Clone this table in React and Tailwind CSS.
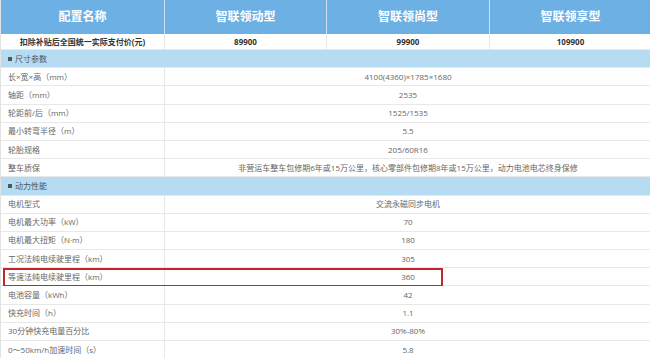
const font = { fontFamily: '"Open Sans", "Noto Sans CJK SC", sans-serif' };

const sections = [
  {
    title: '尺寸参数',
    rows: [
      ['长×宽×高（mm）', '4100(4360)×1785×1680'],
      ['轴距（mm）', '2535'],
      ['轮距前/后（mm）', '1525/1535'],
      ['最小转弯半径（m）', '5.5'],
      ['轮胎规格', '205/60R16'],
      ['整车质保', '非营运车整车包修期6年或15万公里，核心零部件包修期8年或15万公里，动力电池电芯终身保修'],
    ],
  },
  {
    title: '动力性能',
    rows: [
      ['电机型式', '交流永磁同步电机'],
      ['电机最大功率（kW）', '70'],
      ['电机最大扭矩（N·m）', '180'],
      ['工况法纯电续驶里程（km）', '305'],
      ['等速法纯电续驶里程（km）', '360', true],
      ['电池容量（kWh）', '42'],
      ['快充时间（h）', '1.1'],
      ['30分钟快充电量百分比', '30%-80%'],
      ['0～50km/h加速时间（s）', '5.8'],
    ],
  },
];

const cols = 'grid grid-cols-[164px_162px_163px_161px]';

const DataRow = ({ label, value, marked }) => (
  <div className={`${cols} relative h-[18.2px] border-b border-[#e8e8e8] bg-white text-[8px] text-[#666]`}>
    <div className="flex items-center border-r border-[#e8e8e8] pl-[7px]">{label}</div>
    <div className="col-span-3 flex items-center justify-center">{value}</div>
    {marked && (
      <div className="absolute left-[2px] top-0 h-[19px] w-[440px] border-2 border-[#c4262e]"></div>
    )}
  </div>
);

const SectionRow = ({ title }) => (
  <div className="flex h-[18.2px] items-center border-b border-[#e8e8e8] bg-[#b5dcf3] pl-[7px] text-[8px] text-[#555]">
    <span className="mr-[3px] inline-block h-[4px] w-[4px] bg-[#555]"></span>
    {title}
  </div>
);

export default function App() {
  return (
    <div className="h-[358px] w-[650px] overflow-hidden bg-white" style={font}>
      <div className="border-l border-[#e2e2e2]">
        <div className={`${cols} h-[34px] bg-[#6cb0e4] text-[12px] font-bold text-white`}>
          <div className="flex items-center justify-center border-r border-[#c9e1f4]">配置名称</div>
          <div className="flex items-center justify-center border-r border-[#c9e1f4]">智联领动型</div>
          <div className="flex items-center justify-center border-r border-[#c9e1f4]">智联领尚型</div>
          <div className="flex items-center justify-center">智联领享型</div>
        </div>
        <div className={`${cols} h-[16px] border-b border-[#e8e8e8] bg-white text-[8px] font-bold text-[#333]`}>
          <div className="flex items-center justify-center border-r border-[#e8e8e8]">扣除补贴后全国统一实际支付价(元)</div>
          <div className="flex items-center justify-center border-r border-[#e8e8e8]">89900</div>
          <div className="flex items-center justify-center border-r border-[#e8e8e8]">99900</div>
          <div className="flex items-center justify-center">109900</div>
        </div>
        {sections.map((s) => (
          <div key={s.title}>
            <SectionRow title={s.title} />
            {s.rows.map(([label, value, marked]) => (
              <DataRow key={label} label={label} value={value} marked={marked} />
            ))}
          </div>
        ))}
      </div>
    </div>
  );
}
